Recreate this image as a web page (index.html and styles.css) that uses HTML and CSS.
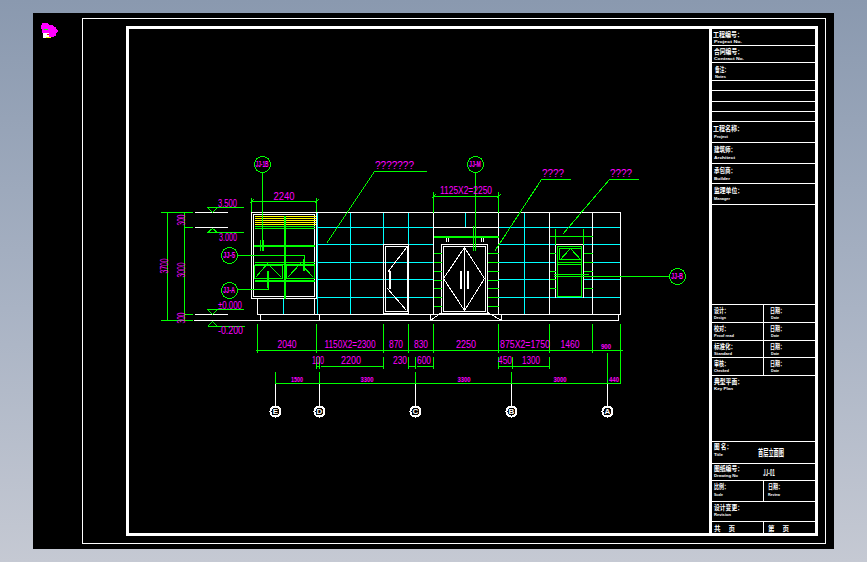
FILE: index.html
```html
<!DOCTYPE html>
<html lang="zh">
<head>
<meta charset="utf-8">
<title>立面图</title>
<link rel="stylesheet" href="styles.css">
</head>
<body>
<main class="canvas">
<svg class="drawing" viewBox="33 13 801 536" width="801" height="536" xmlns="http://www.w3.org/2000/svg">
<g class="px">
  <!-- logo -->
  <path class="logo-m" d="M42 23h5l1 2h4l1 2h2l1 3h1l-1 2h-1v3h-2v1h-5l-2-2h-3l-1-4 -1-3z"/>
  <path class="logo-g" d="M43 29h4"/>
  <path class="logo-w" d="M43 33h5v4h-5z"/>
  <path class="logo-y" d="M45 37h5"/>
  <path class="logo-r" d="M46 34h2"/>

  <!-- sheet frames -->
  <rect class="w" x="82" y="18" width="743" height="525"/>
  <rect class="w3" x="127" y="27" width="689" height="507"/>
  <path class="w3" d="M710 27V534"/>

  <!-- title block rules -->
  <path class="w" d="M710 45H816M710 62H816M710 80H816M710 90H816M710 101H816M710 111H816M710 121H816M710 142H816M710 163H816M710 183H816M710 204H816M710 304H816M710 322H816M710 340H816M710 357H816M710 375H816M710 441H816M710 463H816M710 480H816M710 501H816M710 521H816M763 304V375M763 480V501M763 521V534"/>

  <!-- building outline -->
  <path class="c" d="M317 227H433M317 244H433M317 262H433M317 279H433M317 297H433M498 227H620M498 244H555M583 244H620M498 262H555M583 262H620M498 279H555M583 279H620M498 297H620M350 212V314M383 212V244M408 212V244M465 212V227M524 212V314M317 212V314M283 298V314"/>
  <path class="w" d="M251 212H620M620 212V314M257 314H620M193 320H618M618 314V320M260 314V320M319 314V320M430 314V320M501 314V320M257 298V314M314 298V314M433 212V314M498 212V314M549 212V314M592 212V314M433 227H498M194 212H227M194 227H227M194 314H227"/>
  <rect class="w" x="251" y="212" width="65" height="86"/>
  <rect class="w" x="253" y="214" width="61" height="82"/>

  <!-- yellow louvre -->
  <path class="y" d="M254 216H315M254 218H315M254 220H315M254 222H315M254 224H315"/>

  <!-- left window -->
  <path class="g" d="M254 226H314M254 228H314M254 262H314M254 264H314M260 239V250M263 239V250M262 172V239"/>
  <path class="g2" d="M253 245H314M254 280H314M284 215V298M303 258V270M267 270V287"/>
  <rect class="g" x="254" y="265" width="28" height="13"/>
  <rect class="g" x="286" y="265" width="28" height="13"/>
  <path class="g" d="M255 277L267 263L281 277M287 277L300 263L313 277"/>
  <path class="g" d="M237 255H304V270M237 289H268V270"/>

  <!-- left dims and levels -->
  <path class="g" d="M167 212V320M184 212V320M160 212H192M184 227H192M184 314H192M160 320H192"/>
  <path class="g" d="M206 207H243M207 232H243M206 309H243M207 326H244M207 207L212 212L217 207M207 232L212 228L217 232M207 309L212 314L217 309M207 326L212 321L217 326"/>

  <!-- small door -->
  <rect class="w" x="383" y="244" width="25" height="69"/>
  <rect class="w" x="385" y="246" width="22" height="65"/>
  <path class="w" d="M406 247L387 272M387 288L406 310"/>
  <path class="w2" d="M389 270V288"/>

  <!-- main door -->
  <rect class="w" x="441" y="244" width="46" height="69"/>
  <rect class="w" x="443" y="246" width="42" height="65"/>
  <path class="w" d="M464 246V311M464 247L443 278L464 310L484 278L464 247M446 237V241M448 237V241M481 237V241M483 237V241M430 320L441 312M501 320L487 312"/>
  <path class="w2" d="M460 270V288M467 270V288"/>
  <path class="g2" d="M433 236H498"/>
  <path class="g" d="M433 253H441M433 262H441M433 271H441M433 280H441M433 288H441M433 297H441M433 306H441M487 253H498M487 262H498M487 271H498M487 280H498M487 288H498M487 297H498M487 306H498"/>
  <path class="g" d="M475 172V250M473 225V250"/>
  <path class="g" d="M433 196H498M433 191V212M498 191V212M431 198L435 194M496 198L500 194"/>

  <!-- right window -->
  <path class="w" d="M555 244V297M583 244V297M555 244H583"/>
  <path class="g" d="M549 236H592M555 228V244M583 228V244M553 274H588M553 276H669M549 253H555M549 271H555M549 279H555M549 288H555M583 253H592M583 262H592M583 271H592M583 288H592M557 262H581M557 264H581M559 260L570 248L581 260"/>
  <rect class="g" x="557" y="246" width="24" height="50"/>
  <rect class="g" x="559" y="248" width="22" height="11"/>

  <!-- leaders -->
  <path class="g" d="M374 171H426M374 171L326 243M541 179H570M541 179L494 251M609 179H638M609 179L562 234M262 172V250"/>

  <!-- dim 2240 -->
  <path class="g" d="M251 201H316M251 197V211M316 197V211M249 203L253 199M314 203L318 199"/>

  <!-- dimension rows -->
  <path class="g" d="M255 350H622M257 323V352M316 323V352M383 323V352M408 323V352M433 323V352M498 323V352M549 323V352M592 323V352M620 323V383"/>
  <path class="g" d="M316 366H319M320 366H383M408 366H415M416 366H433M498 366H549M316 356V368M319 356V368M383 356V368M408 356V368M415 356V368M433 356V368M498 356V368M512 356V368M549 356V368"/>
  <path class="g" d="M275 383H620M275 371V383M319 371V383M415 371V383M511 371V383M607 352V383"/>
  <path class="w" d="M275 383V406M319 383V406M415 383V406M511 383V406M607 383V406"/>

  <!-- callout circles -->
  <circle class="g" cx="262" cy="164" r="8"/>
  <circle class="g" cx="475" cy="164" r="8"/>
  <circle class="g" cx="229" cy="255" r="8"/>
  <circle class="g" cx="229" cy="290" r="8"/>
  <circle class="g" cx="677" cy="276" r="8"/>
  <circle class="w2" cx="275" cy="411" r="5"/>
  <circle class="w2" cx="319" cy="411" r="5"/>
  <circle class="w2" cx="415" cy="411" r="5"/>
  <circle class="w2" cx="511" cy="411" r="5"/>
  <circle class="w2" cx="607" cy="411" r="5"/>
</g>

<!-- drawing labels -->
<g class="dim">
  <text x="284" y="200" text-anchor="middle" textLength="21" lengthAdjust="spacingAndGlyphs">2240</text>
  <text x="466" y="194" text-anchor="middle" textLength="52" lengthAdjust="spacingAndGlyphs">1125X2=2250</text>
  <text x="375" y="169" textLength="39" lengthAdjust="spacingAndGlyphs">???????</text>
  <text x="542" y="177" textLength="22" lengthAdjust="spacingAndGlyphs">????</text>
  <text x="610" y="177" textLength="22" lengthAdjust="spacingAndGlyphs">????</text>
  <text x="218" y="207" textLength="19" lengthAdjust="spacingAndGlyphs">3.500</text>
  <text x="219" y="241" textLength="18" lengthAdjust="spacingAndGlyphs">3.000</text>
  <text x="218" y="309" textLength="24" lengthAdjust="spacingAndGlyphs">±0.000</text>
  <text x="218" y="334" textLength="25" lengthAdjust="spacingAndGlyphs">-0.200</text>
  <text transform="translate(168 266) rotate(-90)" text-anchor="middle" textLength="15" lengthAdjust="spacingAndGlyphs">3700</text>
  <text transform="translate(185 270) rotate(-90)" text-anchor="middle" textLength="15" lengthAdjust="spacingAndGlyphs">3000</text>
  <text transform="translate(185 220) rotate(-90)" text-anchor="middle" textLength="11" lengthAdjust="spacingAndGlyphs">300</text>
  <text transform="translate(185 318) rotate(-90)" text-anchor="middle" textLength="11" lengthAdjust="spacingAndGlyphs">300</text>
  <text x="287" y="348" text-anchor="middle" textLength="19" lengthAdjust="spacingAndGlyphs">2040</text>
  <text x="350" y="348" text-anchor="middle" textLength="51" lengthAdjust="spacingAndGlyphs">1150X2=2300</text>
  <text x="396" y="348" text-anchor="middle" textLength="14" lengthAdjust="spacingAndGlyphs">870</text>
  <text x="421" y="348" text-anchor="middle" textLength="14" lengthAdjust="spacingAndGlyphs">830</text>
  <text x="466" y="348" text-anchor="middle" textLength="20" lengthAdjust="spacingAndGlyphs">2250</text>
  <text x="525" y="348" text-anchor="middle" textLength="50" lengthAdjust="spacingAndGlyphs">875X2=1750</text>
  <text x="570" y="348" text-anchor="middle" textLength="19" lengthAdjust="spacingAndGlyphs">1460</text>
  <text class="dim-s" x="606" y="349" text-anchor="middle" textLength="10" lengthAdjust="spacingAndGlyphs">900</text>
  <text x="318" y="364" text-anchor="middle" textLength="12" lengthAdjust="spacingAndGlyphs">100</text>
  <text x="351" y="364" text-anchor="middle" textLength="20" lengthAdjust="spacingAndGlyphs">2200</text>
  <text x="400" y="364" text-anchor="middle" textLength="14" lengthAdjust="spacingAndGlyphs">230</text>
  <text x="424" y="364" text-anchor="middle" textLength="14" lengthAdjust="spacingAndGlyphs">600</text>
  <text x="505" y="364" text-anchor="middle" textLength="14" lengthAdjust="spacingAndGlyphs">450</text>
  <text x="531" y="364" text-anchor="middle" textLength="18" lengthAdjust="spacingAndGlyphs">1300</text>
  <text class="dim-s" x="297" y="382" text-anchor="middle" textLength="12" lengthAdjust="spacingAndGlyphs">1500</text>
  <text class="dim-s" x="367" y="382" text-anchor="middle" textLength="13" lengthAdjust="spacingAndGlyphs">3300</text>
  <text class="dim-s" x="464" y="382" text-anchor="middle" textLength="13" lengthAdjust="spacingAndGlyphs">3300</text>
  <text class="dim-s" x="560" y="382" text-anchor="middle" textLength="13" lengthAdjust="spacingAndGlyphs">3000</text>
  <text class="dim-s" x="614" y="382" text-anchor="middle" textLength="10" lengthAdjust="spacingAndGlyphs">440</text>
  <text class="tag" x="262" y="167" text-anchor="middle" textLength="13" lengthAdjust="spacingAndGlyphs">JJ-1B</text>
  <text class="tag" x="475" y="167" text-anchor="middle" textLength="12" lengthAdjust="spacingAndGlyphs">JJ-M</text>
  <text class="tag" x="229" y="258" text-anchor="middle" textLength="12" lengthAdjust="spacingAndGlyphs">JJ-5</text>
  <text class="tag" x="229" y="293" text-anchor="middle" textLength="12" lengthAdjust="spacingAndGlyphs">JJ-A</text>
  <text class="tag" x="677" y="279" text-anchor="middle" textLength="12" lengthAdjust="spacingAndGlyphs">JJ-B</text>
</g>
<g class="axis">
  <text x="275.500" y="414" text-anchor="middle">E</text>
  <text x="319.500" y="414" text-anchor="middle">D</text>
  <text x="415.500" y="414" text-anchor="middle">C</text>
  <text x="511.500" y="414" text-anchor="middle">B</text>
  <text x="607.500" y="414" text-anchor="middle">A</text>
</g>

<!-- title block text -->
<g class="zh">
  <text x="713" y="37" textLength="30" lengthAdjust="spacingAndGlyphs">工程编号：</text>
  <text x="714" y="54" textLength="29" lengthAdjust="spacingAndGlyphs">合同编号：</text>
  <text x="715" y="72" textLength="14" lengthAdjust="spacingAndGlyphs">备注：</text>
  <text x="713" y="131" textLength="30" lengthAdjust="spacingAndGlyphs">工程名称：</text>
  <text x="714" y="152" textLength="22" lengthAdjust="spacingAndGlyphs">建筑师：</text>
  <text x="714" y="173" textLength="22" lengthAdjust="spacingAndGlyphs">承包商：</text>
  <text x="714" y="193" textLength="29" lengthAdjust="spacingAndGlyphs">监理单位：</text>
  <text x="714" y="313" textLength="15" lengthAdjust="spacingAndGlyphs">设计：</text>
  <text x="714" y="331" textLength="15" lengthAdjust="spacingAndGlyphs">校对：</text>
  <text x="714" y="349" textLength="22" lengthAdjust="spacingAndGlyphs">标准化：</text>
  <text x="714" y="366" textLength="15" lengthAdjust="spacingAndGlyphs">审核：</text>
  <text x="770" y="313" textLength="15" lengthAdjust="spacingAndGlyphs">日期：</text>
  <text x="770" y="331" textLength="15" lengthAdjust="spacingAndGlyphs">日期：</text>
  <text x="770" y="349" textLength="15" lengthAdjust="spacingAndGlyphs">日期：</text>
  <text x="770" y="366" textLength="15" lengthAdjust="spacingAndGlyphs">日期：</text>
  <text x="714" y="384" textLength="29" lengthAdjust="spacingAndGlyphs">典型平面：</text>
  <text x="714" y="449" textLength="18" lengthAdjust="spacingAndGlyphs">图 名：</text>
  <text class="big" x="758" y="456" textLength="26" lengthAdjust="spacingAndGlyphs">首层立面图</text>
  <text x="714" y="471" textLength="29" lengthAdjust="spacingAndGlyphs">图纸编号：</text>
  <text class="big" x="763" y="476" textLength="12" lengthAdjust="spacingAndGlyphs">JJ-01</text>
  <text x="714" y="489" textLength="15" lengthAdjust="spacingAndGlyphs">比例：</text>
  <text x="768" y="489" textLength="15" lengthAdjust="spacingAndGlyphs">日期：</text>
  <text x="714" y="510" textLength="29" lengthAdjust="spacingAndGlyphs">设计变更：</text>
  <text x="714" y="531" textLength="21" lengthAdjust="spacingAndGlyphs">共 　页</text>
  <text x="768" y="531" textLength="21" lengthAdjust="spacingAndGlyphs">第 　页</text>
</g>
<g class="en">
  <text x="714" y="43" textLength="28" lengthAdjust="spacingAndGlyphs">Project No.</text>
  <text x="714" y="60" textLength="30" lengthAdjust="spacingAndGlyphs">Contract No.</text>
  <text x="715" y="78" textLength="11" lengthAdjust="spacingAndGlyphs">Notes</text>
  <text x="714" y="138" textLength="14" lengthAdjust="spacingAndGlyphs">Project</text>
  <text x="714" y="159" textLength="21" lengthAdjust="spacingAndGlyphs">Architect</text>
  <text x="714" y="180" textLength="16" lengthAdjust="spacingAndGlyphs">Builder</text>
  <text x="714" y="200" textLength="16" lengthAdjust="spacingAndGlyphs">Manager</text>
  <text x="714" y="319" textLength="12" lengthAdjust="spacingAndGlyphs">Design</text>
  <text x="714" y="337" textLength="20" lengthAdjust="spacingAndGlyphs">Proof read</text>
  <text x="714" y="355" textLength="18" lengthAdjust="spacingAndGlyphs">Standard</text>
  <text x="714" y="372" textLength="15" lengthAdjust="spacingAndGlyphs">Checked</text>
  <text x="771" y="319" textLength="8" lengthAdjust="spacingAndGlyphs">Date</text>
  <text x="771" y="337" textLength="8" lengthAdjust="spacingAndGlyphs">Date</text>
  <text x="771" y="355" textLength="8" lengthAdjust="spacingAndGlyphs">Date</text>
  <text x="771" y="372" textLength="8" lengthAdjust="spacingAndGlyphs">Date</text>
  <text x="714" y="390" textLength="19" lengthAdjust="spacingAndGlyphs">Key Plan</text>
  <text x="714" y="456" textLength="9" lengthAdjust="spacingAndGlyphs">Title</text>
  <text x="714" y="477" textLength="24" lengthAdjust="spacingAndGlyphs">Drawing No</text>
  <text x="714" y="496" textLength="9" lengthAdjust="spacingAndGlyphs">Scale</text>
  <text x="768" y="496" textLength="12" lengthAdjust="spacingAndGlyphs">Review</text>
  <text x="714" y="516" textLength="17" lengthAdjust="spacingAndGlyphs">Revision</text>
</g>
</svg>
</main>
</body>
</html>
```
FILE: styles.css
```css
html, body {
  margin: 0;
  height: 562px;
  overflow: hidden;
}

body {
  box-sizing: border-box;
  padding: 13px 33px;
  background: linear-gradient(180deg, #8a99af 0%, #a9b3c4 55%, #c5c9d3 100%);
}

.canvas {
  width: 801px;
  height: 536px;
  background: #000;
}

.drawing {
  display: block;
}

.px {
  transform: translate(0.5px, 0.5px);
  shape-rendering: crispEdges;
  fill: none;
}

.w { stroke: #fff; stroke-width: 1; fill: none; }
.w2 { stroke: #fff; stroke-width: 2; fill: none; }
.w3 { stroke: #fff; stroke-width: 3; fill: none; }
.g { stroke: #0f0; stroke-width: 1; fill: none; }
.g2 { stroke: #0f0; stroke-width: 2; fill: none; }
.c { stroke: #0ff; stroke-width: 1; fill: none; }
.y { stroke: #ff0; stroke-width: 1; fill: none; }

.logo-m { fill: #f0f; stroke: #f0f; }
.logo-g { stroke: #0f0; }
.logo-w { fill: #fff; stroke: #fff; }
.logo-y { stroke: #ff0; }
.logo-r { stroke: #f00; }

.dim text {
  font: 11px "Liberation Sans", sans-serif;
  fill: #f0f;
}

.dim .dim-s {
  font-size: 8px;
  font-weight: 700;
}

.dim .tag {
  font-size: 9px;
  font-weight: 700;
}

.axis text {
  font: 700 8px "Liberation Sans", sans-serif;
  fill: #fff;
}

.zh text {
  font: 700 7px "Noto Sans CJK SC", sans-serif;
  fill: #fff;
}

.zh .big {
  font-size: 9px;
}

.en text {
  font: 700 3.5px "Liberation Sans", sans-serif;
  fill: #fff;
}
```
